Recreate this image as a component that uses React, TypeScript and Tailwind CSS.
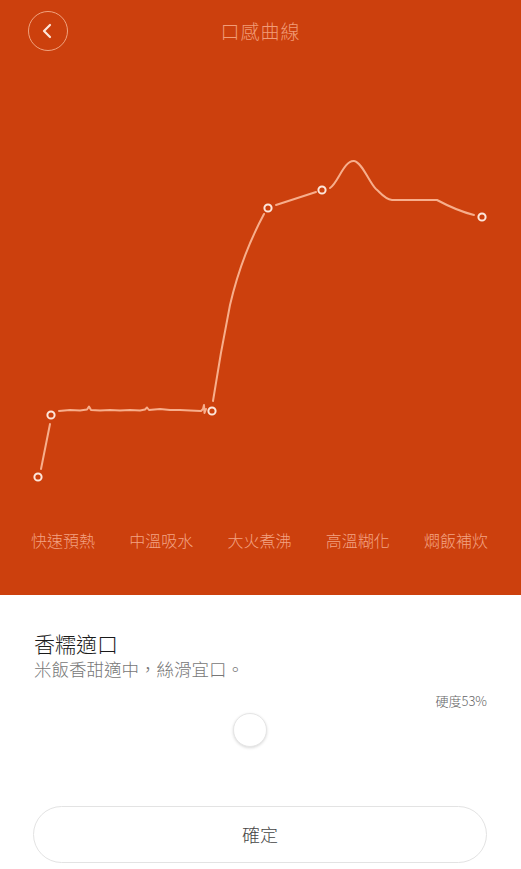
import React from "react";

const stages = ["快速預熱", "中溫吸水", "大火煮沸", "高溫糊化", "燜飯補炊"];

const points: [number, number][] = [
  [38, 477],
  [51, 415],
  [212, 411],
  [268, 208],
  [322, 190],
  [482, 217],
];

function Curve() {
  return (
    <svg className="block w-full h-[453px]" viewBox="0 62 521 453" fill="none">
      <g stroke="#f7ae8c" strokeWidth="2" strokeLinecap="round" strokeLinejoin="round">
        <path d="M41,469 L50,424" />
        <path d="M59,411 L70,410 L80,410.5 L87,409.5 L89,406.5 L91,410 L100,410.5 L110,410 L120,410.5 L130,410 L140,410.5 L145,409.5 L147,407.5 L149,410 L160,409 L170,410 L180,410 L190,410.5 L201,411 L203,409 L204,405 L204.5,413 L206,409" />
        <path d="M213,401 C217,375 224,335 230,305 C237,275 250,240 264,214" />
        <path d="M276,205 L316,192" />
        <path d="M330,188 C338,183 344,160 354,161 C362,162 370,184 376,189 C380,192 384,199 392,200 L437,200 C450,207 462,212 474,215" />
      </g>
      {points.map(([x, y]) => (
        <circle key={x} cx={x} cy={y} r="3.6" fill="#cc400d" stroke="#fde6da" strokeWidth="2" />
      ))}
    </svg>
  );
}

export default function App() {
  return (
    <div
      className="w-[521px] h-[869px] bg-white overflow-hidden"
      style={{ fontFamily: '"Noto Sans CJK TC", "Noto Sans", sans-serif' }}
    >
      {/* Orange chart panel */}
      <section className="bg-[#cc400d] h-[595px] flex flex-col">
        <header className="relative h-[62px] flex items-center justify-center">
          <button className="absolute left-[28px] top-[11px] w-[40px] h-[40px] rounded-full border border-[#f0a27e] flex items-center justify-center">
            <svg width="14" height="16" viewBox="0 0 14 16" fill="none">
              <path d="M9,2 L3,8 L9,14" stroke="#fde6da" strokeWidth="2.2" strokeLinecap="round" strokeLinejoin="round" />
            </svg>
          </button>
          <h1 className="text-[19px] font-light text-[#f19c78] tracking-[1px]">口感曲線</h1>
        </header>

        <Curve />

        <div className="grid grid-cols-5 pl-[14px] pr-[16px] h-[50px] items-center">
          {stages.map((s) => (
            <span key={s} className="text-center text-[16px] font-light text-[#f3a383] whitespace-nowrap">
              {s}
            </span>
          ))}
        </div>
      </section>

      {/* Taste detail */}
      <section className="px-[34px] pt-[34px] flex flex-col">
        <h2 className="text-[21px] leading-[28px] text-[#1a1a1a] font-light">香糯適口</h2>
        <p className="text-[17.5px] leading-[24px] text-[#777] font-light">米飯香甜適中，絲滑宜口。</p>
        <div className="mt-[12px] text-right text-[13px] leading-[16px] text-[#666] font-light">硬度53%</div>
        <div className="mt-[4px] h-[34px]">
          <div className="ml-[199px] w-[34px] h-[34px] rounded-full bg-white border border-[#e6e6e6] shadow-[0_1px_3px_rgba(0,0,0,0.15)]" />
        </div>
        <button className="mt-[59px] -ml-[1px] w-[454px] h-[57px] rounded-full border border-[#e3e3e3] text-[18px] text-[#444] font-light">
          確定
        </button>
      </section>
    </div>
  );
}
